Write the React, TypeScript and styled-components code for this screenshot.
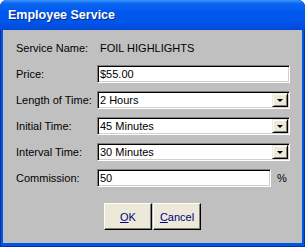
import styled, { createGlobalStyle } from "styled-components";

const GlobalStyle = createGlobalStyle`
  body {
    margin: 0;
    background: #ffffff;
    font-family: "Liberation Sans", Arial, sans-serif;
  }
`;

const Window = styled.div`
  width: 305px;
  height: 247px;
  display: flex;
  flex-direction: column;
  background: #0055e5;
  border-radius: 7px 7px 0 0;
  overflow: hidden;
  box-shadow: inset 1px 0 #0831a8, inset -1px 0 #0831a8, inset 0 -1px #0831a8;
`;

const TitleBar = styled.div`
  height: 30px;
  flex: none;
  display: flex;
  align-items: center;
  padding-left: 8px;
  background: linear-gradient(
    to bottom,
    #3d95ff 0%,
    #0a66f0 12%,
    #0058ee 40%,
    #0055e8 75%,
    #0049d8 100%
  );
  color: #ffffff;
  font-weight: 700;
  font-size: 12.5px;
  text-shadow: 1px 1px #0b2a8a;
`;

const Body = styled.div`
  flex: 1;
  margin: 0 3px 4px;
  background: #c0c0c0;
  padding: 5px 12px 0 13px;
  display: flex;
  flex-direction: column;
`;

const Form = styled.div`
  display: grid;
  grid-template-columns: 81px 1fr;
  grid-auto-rows: 26px;
  align-items: center;
`;

const Label = styled.span`
  font-size: 11px;
  color: #000000;
`;

const Value = styled.span`
  font-size: 11px;
  color: #000000;
  padding-left: 3px;
`;

const FieldRow = styled.div`
  display: flex;
  align-items: center;
`;

const Sunken = styled.div<{ $width?: number }>`
  box-sizing: border-box;
  height: 18px;
  width: ${(p) => (p.$width ? `${p.$width}px` : "100%")};
  display: flex;
  align-items: center;
  background: #ffffff;
  border: 1px solid;
  border-color: #808080 #ffffff #ffffff #808080;
  box-shadow: inset 1px 1px #000000, inset -1px -1px #d4d0c8;
  padding: 0 2px 0 2px;
  font-size: 11px;
  color: #000000;
`;

const FieldText = styled.span`
  flex: 1;
  white-space: nowrap;
`;

const DropButton = styled.div`
  box-sizing: border-box;
  width: 16px;
  height: 14px;
  margin-right: -1px;
  background: #ece9d8;
  border: 1px solid;
  border-color: #ece9d8 #000000 #000000 #ece9d8;
  box-shadow: inset 1px 1px #ffffff, inset -1px -1px #808080;
  display: flex;
  align-items: center;
  justify-content: center;
`;

const Arrow = styled.div`
  width: 0;
  height: 0;
  border-left: 3px solid transparent;
  border-right: 3px solid transparent;
  border-top: 3px solid #000000;
`;

const Unit = styled.span`
  font-size: 11px;
  color: #000000;
  margin-left: 6px;
`;

const ButtonRow = styled.div`
  display: flex;
  justify-content: center;
  margin-top: 12px;
  margin-left: -13px;
  margin-right: -12px;
`;

const Button = styled.button`
  box-sizing: border-box;
  width: 48px;
  height: 27px;
  margin-right: 1px;
  background: #ece9d8;
  border: 1px solid;
  border-color: #ffffff #000000 #000000 #ffffff;
  box-shadow: inset -1px -1px #808080;
  font-family: "Liberation Sans", Arial, sans-serif;
  font-size: 11px;
  color: #000080;
  padding: 0;
  &:last-child {
    margin-right: 0;
  }
  u {
    text-decoration: underline;
  }
`;

function Select({ value }: { value: string }) {
  return (
    <Sunken>
      <FieldText>{value}</FieldText>
      <DropButton>
        <Arrow />
      </DropButton>
    </Sunken>
  );
}

export default function App() {
  return (
    <>
      <GlobalStyle />
      <Window>
        <TitleBar>Employee Service</TitleBar>
        <Body>
          <Form>
            <Label>Service Name:</Label>
            <Value>FOIL HIGHLIGHTS</Value>

            <Label>Price:</Label>
            <Sunken>
              <FieldText>$55.00</FieldText>
            </Sunken>

            <Label>Length of Time:</Label>
            <Select value="2 Hours" />

            <Label>Initial Time:</Label>
            <Select value="45 Minutes" />

            <Label>Interval Time:</Label>
            <Select value="30 Minutes" />

            <Label>Commission:</Label>
            <FieldRow>
              <Sunken $width={174}>
                <FieldText>50</FieldText>
              </Sunken>
              <Unit>%</Unit>
            </FieldRow>
          </Form>
          <ButtonRow>
            <Button>
              <u>O</u>K
            </Button>
            <Button>
              <u>C</u>ancel
            </Button>
          </ButtonRow>
        </Body>
      </Window>
    </>
  );
}
